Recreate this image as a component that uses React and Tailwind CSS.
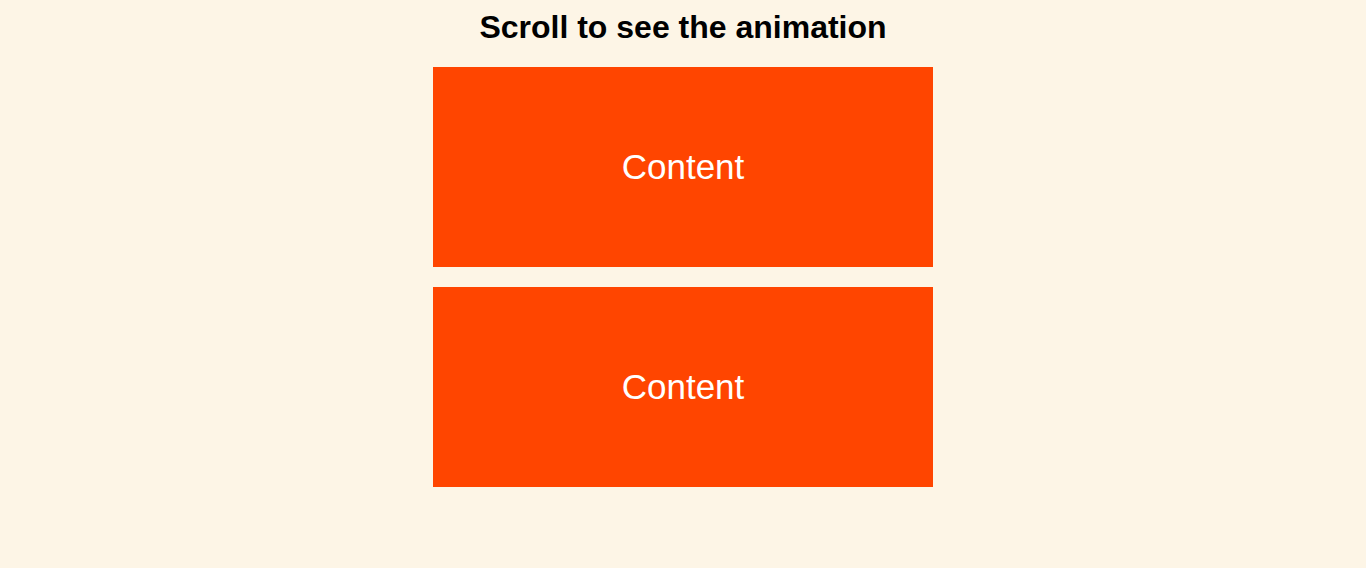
export default function App() {
  return (
    <div className="min-h-screen bg-[#fdf5e6] font-['Liberation_Sans',Arial,sans-serif]">
      <h1 className="pt-[8px] text-center text-[32px] font-bold leading-[38px] text-black">
        Scroll to see the animation
      </h1>
      <div className="mt-[21px] flex flex-col items-center gap-5">
        {[0, 1].map((i) => (
          <div
            key={i}
            className="flex h-[200px] w-[500px] items-center justify-center bg-[#ff4500] text-[35px] text-white"
          >
            Content
          </div>
        ))}
      </div>
    </div>
  );
}
